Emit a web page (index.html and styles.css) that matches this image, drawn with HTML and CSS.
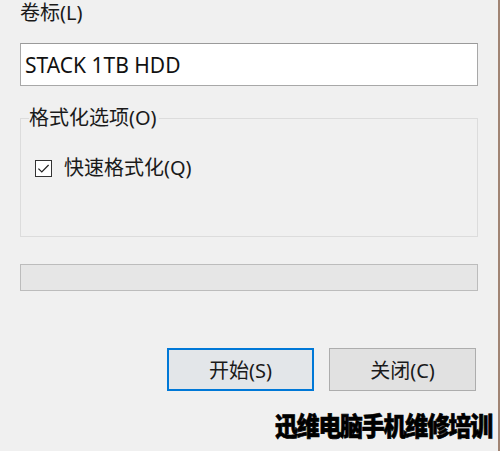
FILE: index.html
```html
<!DOCTYPE html>
<html lang="zh-CN">
<head>
    <meta charset="UTF-8">
    <title>格式化</title>
    <link rel="stylesheet" href="styles.css">
</head>
<body>
    <div class="dialog">
        <label class="field-label" for="volume">卷标(L)</label>
        <input class="text-box" id="volume" type="text" value="STACK 1TB HDD">

        <fieldset class="group">
            <legend>格式化选项(O)</legend>
            <label class="check-row">
                <span class="check-box">
                    <svg width="15" height="15" viewBox="0 0 15 15"><path d="M2.4 7.6 L5.8 11 L12.6 4" fill="none" stroke="#222" stroke-width="1.2"/></svg>
                </span>
                <span>快速格式化(Q)</span>
            </label>
        </fieldset>

        <div class="progress"></div>

        <div class="buttons">
            <button type="button" class="btn focused">开始(S)</button>
            <button type="button" class="btn">关闭(C)</button>
        </div>

        <div class="watermark"><span>迅维电脑手机维修培训</span></div>
    </div>
</body>
</html>
```

FILE: styles.css
```css
body {
    margin: 0;
    background: #f0f0f0;
    font-family: "Noto Sans", "Noto Sans CJK SC", sans-serif;
    color: #1a1a1a;
    height: 451px;
    overflow: hidden;
}
.dialog {
    height: 451px;
    box-sizing: border-box;
    padding: 0 20px 0 20px;
    border-right: 2px solid #a08474;
}
.field-label {
    display: block;
    font-size: 20px;
    line-height: 26px;
}
.text-box {
    display: block;
    box-sizing: border-box;
    width: 458px;
    height: 43px;
    margin-top: 17px;
    padding: 0 4px;
    border: 1px solid #a8a8a8;
    border-top-color: #9a9a9a;
    background: #fff;
    font-family: inherit;
    font-size: 21px;
    color: #111;
    outline: none;
}
.group {
    box-sizing: border-box;
    width: 458px;
    height: 129px;
    margin: 22px 0 0 0;
    padding: 0 0 0 14px;
    border: 1px solid #dcdcdc;
}
.group legend {
    padding: 0 2px 0 0;
    margin-left: -6px;
    font-size: 20px;
    line-height: 20px;
}
.check-row {
    display: flex;
    align-items: center;
    gap: 12px;
    margin-top: 27px;
    font-size: 20px;
    line-height: 26px;
}
.check-box {
    display: flex;
    flex: none;
    width: 15px;
    height: 15px;
    border: 1px solid #333;
    background: #fff;
}
.progress {
    box-sizing: border-box;
    width: 458px;
    height: 27px;
    margin-top: 27px;
    border: 1px solid #bcbcbc;
    background: #e6e6e6;
}
.buttons {
    display: flex;
    justify-content: flex-end;
    gap: 15px;
    margin-top: 57px;
    padding-right: 2px;
}
.btn {
    box-sizing: border-box;
    width: 147px;
    height: 43px;
    border: 1px solid #adadad;
    background: #e1e1e1;
    font-family: inherit;
    font-size: 20px;
    color: #1a1a1a;
    padding: 0;
}
.btn.focused {
    border: 2px solid #0078d7;
    background: #e3e6e9;
}
.watermark {
    text-align: right;
    margin-top: 18px;
    margin-right: -14px;
    line-height: 32px;
}
.watermark span {
    display: inline-block;
    font-family: "Noto Sans CJK SC", sans-serif;
    font-size: 23px;
    letter-spacing: -1.3px;
    font-weight: 900;
    color: #000;
    -webkit-text-stroke: 0.6px #000;
    transform: scaleY(1.12);
    transform-origin: right center;
}
```
